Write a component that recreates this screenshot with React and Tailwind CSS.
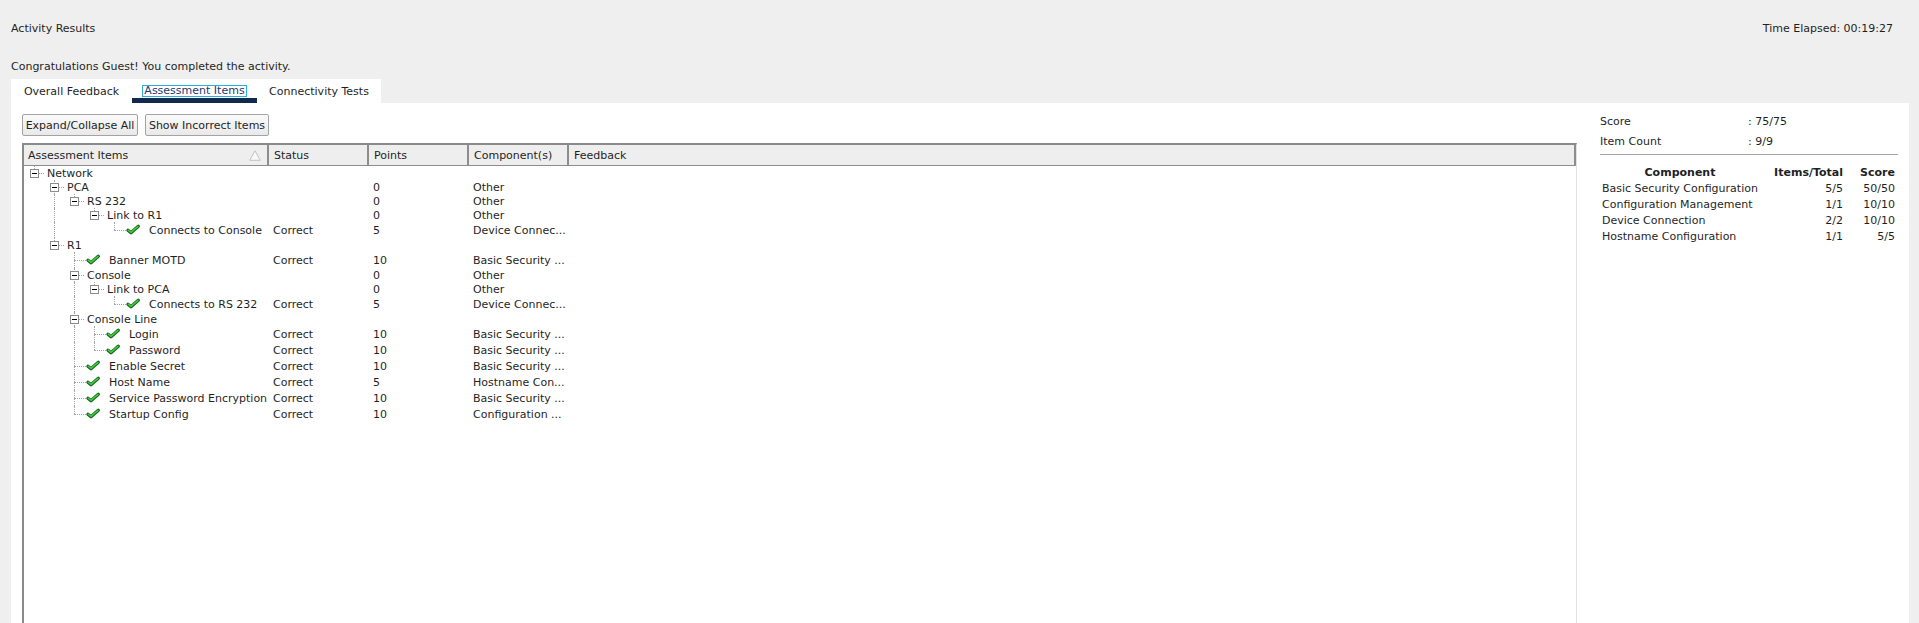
import React from 'react';

const tree = {
  label: 'Network',
  children: [
    {
      label: 'PCA', points: '0', comp: 'Other',
      children: [
        {
          label: 'RS 232', points: '0', comp: 'Other',
          children: [
            {
              label: 'Link to R1', points: '0', comp: 'Other',
              children: [
                { label: 'Connects to Console', leaf: true, status: 'Correct', points: '5', comp: 'Device Connec...' },
              ],
            },
          ],
        },
      ],
    },
    {
      label: 'R1',
      children: [
        { label: 'Banner MOTD', leaf: true, status: 'Correct', points: '10', comp: 'Basic Security ...' },
        {
          label: 'Console', points: '0', comp: 'Other',
          children: [
            {
              label: 'Link to PCA', points: '0', comp: 'Other',
              children: [
                { label: 'Connects to RS 232', leaf: true, status: 'Correct', points: '5', comp: 'Device Connec...' },
              ],
            },
          ],
        },
        {
          label: 'Console Line',
          children: [
            { label: 'Login', leaf: true, status: 'Correct', points: '10', comp: 'Basic Security ...' },
            { label: 'Password', leaf: true, status: 'Correct', points: '10', comp: 'Basic Security ...' },
          ],
        },
        { label: 'Enable Secret', leaf: true, status: 'Correct', points: '10', comp: 'Basic Security ...' },
        { label: 'Host Name', leaf: true, status: 'Correct', points: '5', comp: 'Hostname Con...' },
        { label: 'Service Password Encryption', leaf: true, status: 'Correct', points: '10', comp: 'Basic Security ...' },
        { label: 'Startup Config', leaf: true, status: 'Correct', points: '10', comp: 'Configuration ...' },
      ],
    },
  ],
};

function flatten(node, level, cont, hasNext, out) {
  out.push({ ...node, level, cont, hasNext });
  const kids = node.children || [];
  kids.forEach((k, i) => {
    flatten(k, level + 1, level >= 1 ? [...cont, hasNext] : [], i < kids.length - 1, out);
  });
  return out;
}

const rows = flatten(tree, 0, [], false, []);

const summary = [
  ['Basic Security Configuration', '5/5', '50/50'],
  ['Configuration Management', '1/1', '10/10'],
  ['Device Connection', '2/2', '10/10'],
  ['Hostname Configuration', '1/1', '5/5'],
];

function Check() {
  return (
    <svg width="14" height="11" viewBox="0 0 14 11" aria-hidden="true">
      <path d="M2 6.2 L5 8.8 L12.3 2.2" fill="none" stroke="#1b5e1b" strokeWidth="3.2" strokeLinecap="round" strokeLinejoin="round" />
      <path d="M2.3 6.2 L5 8.4 L12 2.4" fill="none" stroke="#3ccf3c" strokeWidth="1.5" strokeLinecap="round" strokeLinejoin="round" />
    </svg>
  );
}

function TreeRow({ row }) {
  const h = row.leaf ? 16 : 14;
  const mid = h / 2;
  const x = 10 + 20 * row.level;
  return (
    <div className="grid grid-cols-[245px_100px_100px_100px_1fr]" style={{ height: h }}>
      <div className="relative flex items-center whitespace-nowrap" style={{ paddingLeft: row.leaf ? 45 + 20 * row.level : 23 + 20 * row.level }}>
        {row.cont.map((c, i) =>
          c ? (
            <span key={i} className="absolute top-0 h-full border-l border-dotted border-[#a3a3a3]" style={{ left: 10 + 20 * (i + 1) }} />
          ) : null
        )}
        <span
          className="absolute top-0 border-l border-dotted border-[#a3a3a3]"
          style={{ left: x, height: row.hasNext ? h : mid }}
        />
        <span
          className="absolute border-t border-dotted border-[#a3a3a3]"
          style={{ left: x, top: mid, width: row.leaf ? 12 : 10 }}
        />
        {row.leaf ? (
          <span className="absolute top-[2px]" style={{ left: x + 12 }}>
            <Check />
          </span>
        ) : (
          <span
            className="absolute flex h-[9px] w-[9px] items-center justify-center border border-[#8c8c8c] bg-white"
            style={{ left: x - 4, top: (h - 9) / 2 }}
          >
            <span className="h-px w-[5px] bg-black" />
          </span>
        )}
        <span className="relative">{row.label}</span>
      </div>
      <div className="flex items-center px-[4px] whitespace-nowrap">{row.status}</div>
      <div className="flex items-center px-[4px] whitespace-nowrap">{row.points}</div>
      <div className="flex items-center px-[4px] whitespace-nowrap">{row.comp}</div>
      <div />
    </div>
  );
}

export default function App() {
  return (
    <div className="flex h-screen flex-col overflow-hidden bg-[#efefef] font-['DejaVu_Sans',sans-serif] text-[11px] leading-[13px] text-[#1f1f1f]">
      <div className="flex h-[56px] shrink-0 items-center justify-between pl-[11px] pr-[26px]">
        <span>Activity Results</span>
        <span>Time Elapsed: 00:19:27</span>
      </div>
      <div className="flex h-[20px] shrink-0 items-center pl-[11px]">Congratulations Guest! You completed the activity.</div>

      <div className="ml-[11px] mt-[3px] flex h-[24px] w-[370px] shrink-0 bg-white">
        <div className="flex w-[121px] items-center justify-center">Overall Feedback</div>
        <div className="relative flex w-[125px] items-center justify-center">
          <span className="border border-[#2bb0e0] px-[1px] leading-[10px] text-[#1c3a70]">Assessment Items</span>
          <span className="absolute bottom-0 left-0 h-[5px] w-full bg-[#0f2a4e]" />
        </div>
        <div className="flex w-[124px] items-center justify-center">Connectivity Tests</div>
      </div>

      <div className="ml-[11px] mr-[10px] flex min-h-0 flex-1 bg-white">
        <div className="flex min-w-0 flex-1 flex-col pl-[11px] pt-[11px]">
          <div className="flex gap-[7px]">
            <button className="h-[22px] w-[116px] rounded-[2px] border border-[#a3a3a3] bg-gradient-to-b from-[#fafafa] to-[#e9e9e9] text-[11px]">
              Expand/Collapse All
            </button>
            <button className="h-[22px] w-[124px] rounded-[2px] border border-[#a3a3a3] bg-gradient-to-b from-[#fafafa] to-[#e9e9e9] text-[11px]">
              Show Incorrect Items
            </button>
          </div>
          <div className="mt-[7px] flex-1 border-l-2 border-t-2 border-r border-l-[#8a8a8a] border-t-[#8a8a8a] border-r-[#e3e3e3]">
            <div className="grid h-[21px] grid-cols-[245px_100px_100px_100px_1fr] border-b border-[#8d8d8d] bg-[#eeeeee]">
              <div className="flex items-center justify-between border-r-2 border-[#8d8d8d] pl-[4px] pr-[6px]">
                <span>Assessment Items</span>
                <svg width="12" height="11" viewBox="0 0 12 11" aria-hidden="true">
                  <polygon points="6,0.8 11.3,10.3 0.7,10.3" fill="#f8f8f8" stroke="#c2c2c2" strokeWidth="1" />
                </svg>
              </div>
              <div className="flex items-center border-r-2 border-[#8d8d8d] px-[5px]">Status</div>
              <div className="flex items-center border-r-2 border-[#8d8d8d] px-[5px]">Points</div>
              <div className="flex items-center border-r-2 border-[#8d8d8d] px-[5px]">Component(s)</div>
              <div className="flex items-center border-r-2 border-[#8d8d8d] px-[5px]">Feedback</div>
            </div>
            {rows.map((r, i) => (
              <TreeRow key={i} row={r} />
            ))}
          </div>
        </div>

        <div className="w-[332px] shrink-0 pl-[23px] pr-[11px] pt-[8px]">
          <div className="flex h-[20px] items-center">
            <span className="w-[148px]">Score</span>
            <span>: 75/75</span>
          </div>
          <div className="flex h-[20px] items-center">
            <span className="w-[148px]">Item Count</span>
            <span>: 9/9</span>
          </div>
          <div className="mt-[3px] border-t border-[#a3a3a3]" />
          <table className="mt-[9px] border-collapse">
            <thead>
              <tr className="h-[16px] font-bold">
                <th className="w-[160px] p-0 text-center">Component</th>
                <th className="w-[83px] p-0 text-right">Items/Total</th>
                <th className="w-[52px] p-0 text-right">Score</th>
              </tr>
            </thead>
            <tbody>
              {summary.map((s) => (
                <tr key={s[0]} className="h-[16px]">
                  <td className="p-0 pl-[2px]">{s[0]}</td>
                  <td className="p-0 text-right">{s[1]}</td>
                  <td className="p-0 text-right">{s[2]}</td>
                </tr>
              ))}
            </tbody>
          </table>
        </div>
      </div>
    </div>
  );
}
